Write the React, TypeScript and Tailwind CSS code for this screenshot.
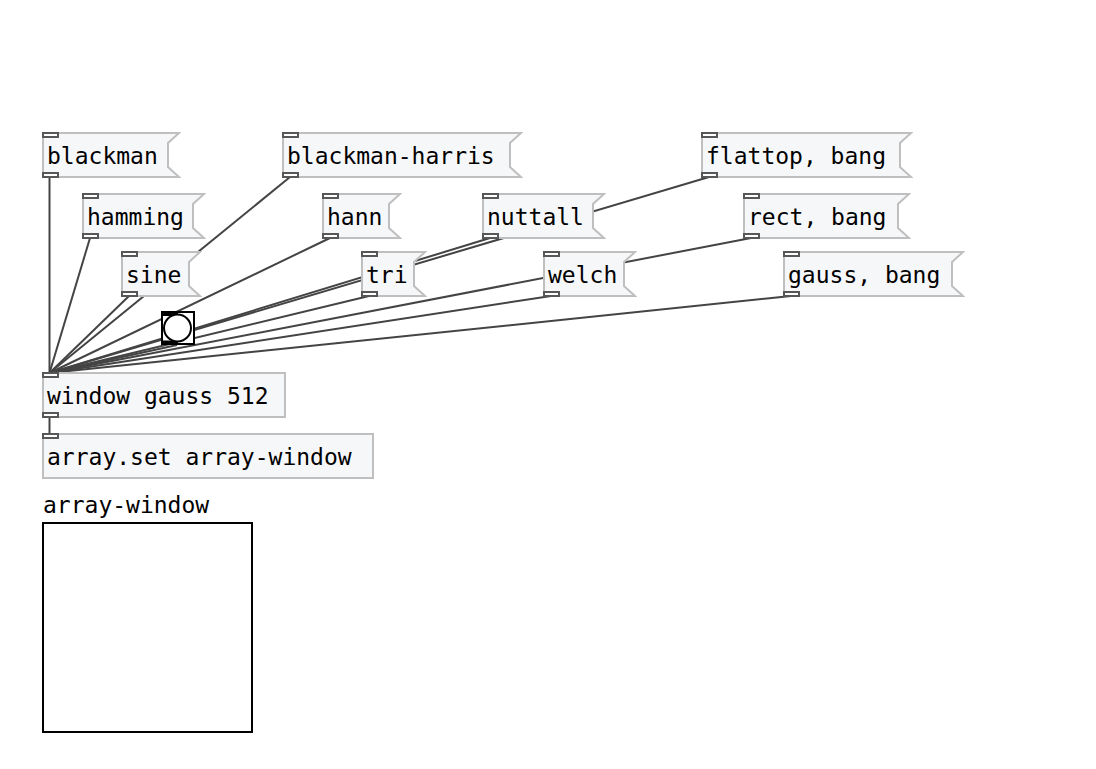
import React from "react";

type PatchNode = { id: string; text: string; x: number; y: number; w: number };

const messages: PatchNode[] = [
  { id: "blackman", text: "blackman", x: 42, y: 132, w: 139 },
  { id: "blackman-harris", text: "blackman-harris", x: 282, y: 132, w: 241 },
  { id: "flattop", text: "flattop, bang", x: 701, y: 132, w: 212 },
  { id: "hamming", text: "hamming", x: 82, y: 193, w: 124 },
  { id: "hann", text: "hann", x: 322, y: 193, w: 80 },
  { id: "nuttall", text: "nuttall", x: 482, y: 193, w: 124 },
  { id: "rect", text: "rect, bang", x: 743, y: 193, w: 168 },
  { id: "sine", text: "sine", x: 121, y: 251, w: 81 },
  { id: "tri", text: "tri", x: 361, y: 251, w: 66 },
  { id: "welch", text: "welch", x: 543, y: 251, w: 94 },
  { id: "gauss", text: "gauss, bang", x: 783, y: 251, w: 182 },
];

const objects: (PatchNode & { outlet: boolean })[] = [
  { id: "window", text: "window gauss 512", x: 42, y: 372, w: 244, outlet: true },
  { id: "set", text: "array.set array-window", x: 42, y: 433, w: 332, outlet: false },
];

const NODE_HEIGHT = 46;
const PORT_X = 8;

function Port({ side }: { side: "top" | "bottom" }) {
  return (
    <span
      className={
        side === "top"
          ? "absolute left-0 top-0 h-1.5 w-[17px] border-2 border-[#575757] bg-white"
          : "absolute bottom-0 left-0 h-1.5 w-[17px] border-2 border-[#575757] bg-white"
      }
    />
  );
}

function Message({ node }: { node: PatchNode }) {
  const r = node.w - 2;
  const outline = `M1 1H${r}L${r - 11} 11V35L${r} 45H1Z`;
  return (
    <button
      type="button"
      className="absolute flex h-[46px] items-center pl-[5px] pt-0.5 text-left"
      style={{ left: node.x, top: node.y, width: node.w }}
    >
      <svg className="absolute inset-0 h-full w-full" viewBox={`0 0 ${node.w} ${NODE_HEIGHT}`} aria-hidden="true">
        <path d={outline} fill="#f6f7f9" stroke="#bfbfbf" strokeWidth="2" />
      </svg>
      <Port side="top" />
      <Port side="bottom" />
      <span className="relative whitespace-pre">{node.text}</span>
    </button>
  );
}

function Cords() {
  const inlet = { x: 49.5, y: 373 };
  return (
    <svg className="absolute inset-0 h-full w-full" aria-hidden="true">
      <g stroke="#444444" strokeWidth="2">
        {messages.map((m) => (
          <line
            key={m.id}
            x1={m.id === "blackman" ? inlet.x : m.x + PORT_X}
            y1={m.y + NODE_HEIGHT - 1}
            x2={inlet.x}
            y2={inlet.y}
          />
        ))}
        <line x1={177} y1={345} x2={inlet.x} y2={inlet.y} />
        <line x1={inlet.x} y1={417} x2={inlet.x} y2={434} />
      </g>
    </svg>
  );
}

export default function App() {
  return (
    <main className="relative min-h-screen w-full overflow-hidden bg-white font-['DejaVu_Sans_Mono','Liberation_Mono',monospace] text-[23px] leading-7 text-black">
      <Cords />
      {messages.map((m) => (
        <Message key={m.id} node={m} />
      ))}

      <button type="button" aria-label="bang" className="absolute left-[161px] top-[311px] h-[34px] w-[34px] bg-white">
        <svg className="h-full w-full" viewBox="0 0 34 34" fill="none" stroke="black">
          <rect x="1" y="1" width="32" height="32" strokeWidth="2" />
          <path d="M1 1H17V3L12 5H1ZM1 33H17V31L12 29.500H1Z" fill="black" stroke="none" />
          <circle cx="16.500" cy="17" r="13.500" strokeWidth="2" />
        </svg>
      </button>

      {objects.map((o) => (
        <div
          key={o.id}
          className="absolute flex h-[46px] items-center border-2 border-[#bfbfbf] bg-[#f6f7f9] pl-[3px] pt-0.5"
          style={{ left: o.x, top: o.y, width: o.w }}
        >
          <span className="absolute -inset-0.5">
            <Port side="top" />
            {o.outlet && <Port side="bottom" />}
          </span>
          <span className="relative whitespace-pre">{o.text}</span>
        </div>
      ))}

      <figure className="absolute left-[42px] top-[491px]">
        <figcaption className="mb-[3px] whitespace-pre pl-px">array-window</figcaption>
        <div className="h-[211px] w-[211px] border-2 border-black bg-white" />
      </figure>
    </main>
  );
}
